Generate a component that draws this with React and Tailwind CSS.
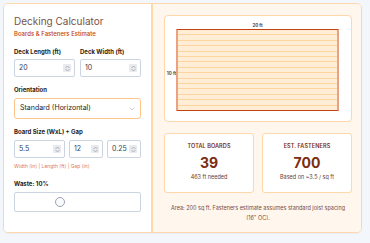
import React from 'react'
import { ChevronDown } from 'lucide-react'

const Spinner = () => (
  <div className="w-[8px] h-[8px] bg-[#e8eaee] rounded-[1px] flex flex-col items-center justify-center gap-[1px]">
    <svg width="5" height="2" viewBox="0 0 5 2"><path d="M0.5 2 L2.5 0 L4.5 2" fill="none" stroke="#9ca3af" strokeWidth="0.8" /></svg>
    <svg width="5" height="2" viewBox="0 0 5 2"><path d="M0.5 0 L2.5 2 L4.5 0" fill="none" stroke="#9ca3af" strokeWidth="0.8" /></svg>
  </div>
)

const NumInput = ({ value }) => (
  <div className="h-[18px] border border-[#cbd5e1] rounded-[2px] bg-white flex items-center justify-between pl-[4px] pr-[3px]">
    <span className="text-[7px] text-[#334155]">{value}</span>
    <Spinner />
  </div>
)

const Label = ({ children }) => (
  <div className="text-[6px] leading-[8px] font-bold text-[#2a1d17]">{children}</div>
)

const Stat = ({ title, value, sub }) => (
  <div className="flex-1 h-[60px] bg-white border border-[#fed7aa] rounded-[3px] flex flex-col items-center pt-[9px]">
    <div className="text-[5.5px] leading-[7px] font-semibold uppercase text-[#7c2d12] tracking-[0.1px]">{title}</div>
    <div className="text-[14px] leading-[16px] font-bold text-[#7c2d12] mt-[5px]">{value}</div>
    <div className="text-[5.5px] leading-[7px] text-[#6b4032] mt-[3px]">{sub}</div>
  </div>
)

export default function App() {
  return (
    <div className="w-[370px] h-[243px] bg-[#f3f7fb] pt-[3px] pl-[3px] font-['Inter',sans-serif]">
      <div className="flex w-[359px] h-[230px] border border-[#fed7aa] rounded-[5px] overflow-hidden shadow-[0_1px_2px_rgba(0,0,0,0.04)]">
        {/* Left form */}
        <div className="w-[149px] bg-white border-r-2 border-[#fed7aa] pl-[10px] pr-[10px] pt-[11px]">
          <div className="text-[10px] leading-[12px] text-[#7a5245]">Decking Calculator</div>
          <div className="text-[6px] leading-[8px] font-medium text-[#c2410c] mt-[3px]">Boards &amp; Fasteners Estimate</div>

          <div className="grid grid-cols-2 gap-[5px] mt-[10px]">
            <div>
              <Label>Deck Length (ft)</Label>
              <div className="mt-[3px]"><NumInput value="20" /></div>
            </div>
            <div>
              <Label>Deck Width (ft)</Label>
              <div className="mt-[3px]"><NumInput value="10" /></div>
            </div>
          </div>

          <div className="mt-[9px]">
            <Label>Orientation</Label>
            <div className="mt-[4px] h-[21px] border border-[#fdc58a] rounded-[3px] flex items-center justify-between pl-[5px] pr-[4px]">
              <span className="text-[7px] text-[#2a1d17]">Standard (Horizontal)</span>
              <ChevronDown size={8} color="#a3a3a3" strokeWidth={1.5} />
            </div>
          </div>

          <div className="mt-[9px]">
            <Label>Board Size (WxL) + Gap</Label>
            <div className="grid grid-cols-[3fr_2fr_2fr] gap-[4px] mt-[4px]">
              <NumInput value="5.5" />
              <NumInput value="12" />
              <NumInput value="0.25" />
            </div>
            <div className="text-[5px] leading-[7px] text-[#e07b54] mt-[5px]">Width (in) | Length (ft) | Gap (in)</div>
          </div>

          <div className="mt-[10px]">
            <Label>Waste: 10%</Label>
            <div className="relative mt-[4px] h-[20px] border border-[#cbd5e1] rounded-[2px] bg-white">
              <div className="absolute left-[40px] top-[4px] w-[10px] h-[10px] rounded-full border border-[#9ca3af] bg-[#f9fafb]" />
            </div>
          </div>
        </div>

        {/* Right results */}
        <div className="flex-1 bg-[#fff7ed] pl-[11px] pr-[9px] pt-[11px]">
          <div className="h-[107px] bg-white border border-[#fed7aa] rounded-[4px] pl-[2px] pr-[12px] pt-[6px] flex">
            <div className="w-[9px] flex items-center justify-center pt-[6px]">
              <span className="text-[4.5px] font-bold text-[#5b3a30] whitespace-nowrap">10 ft</span>
            </div>
            <div className="flex-1 flex flex-col">
              <div className="h-[7px] text-center text-[4.5px] leading-[7px] font-bold text-[#5b3a30]">20 ft</div>
              <div className="h-[82px] border-y border-x-2 border-y-[#c2410c] border-x-[#e9a283] bg-[#ffedd5] flex flex-col">
                {Array.from({ length: 15 }).map((_, i) => (
                  <div key={i} className={`flex-1 ${i < 14 ? 'border-b border-[#fdd4a0]' : ''}`} />
                ))}
              </div>
            </div>
          </div>

          <div className="flex gap-[8px] mt-[11px]">
            <Stat title="Total Boards" value="39" sub="463 ft needed" />
            <Stat title="Est. Fasteners" value="700" sub="Based on ~3.5 / sq ft" />
          </div>

          <div className="text-center text-[5.5px] leading-[10px] text-[#7c4a3a] mt-[10px] px-[2px]">
            Area: 200 sq ft. Fasteners estimate assumes standard joist spacing (16" OC).
          </div>
        </div>
      </div>
    </div>
  )
}
